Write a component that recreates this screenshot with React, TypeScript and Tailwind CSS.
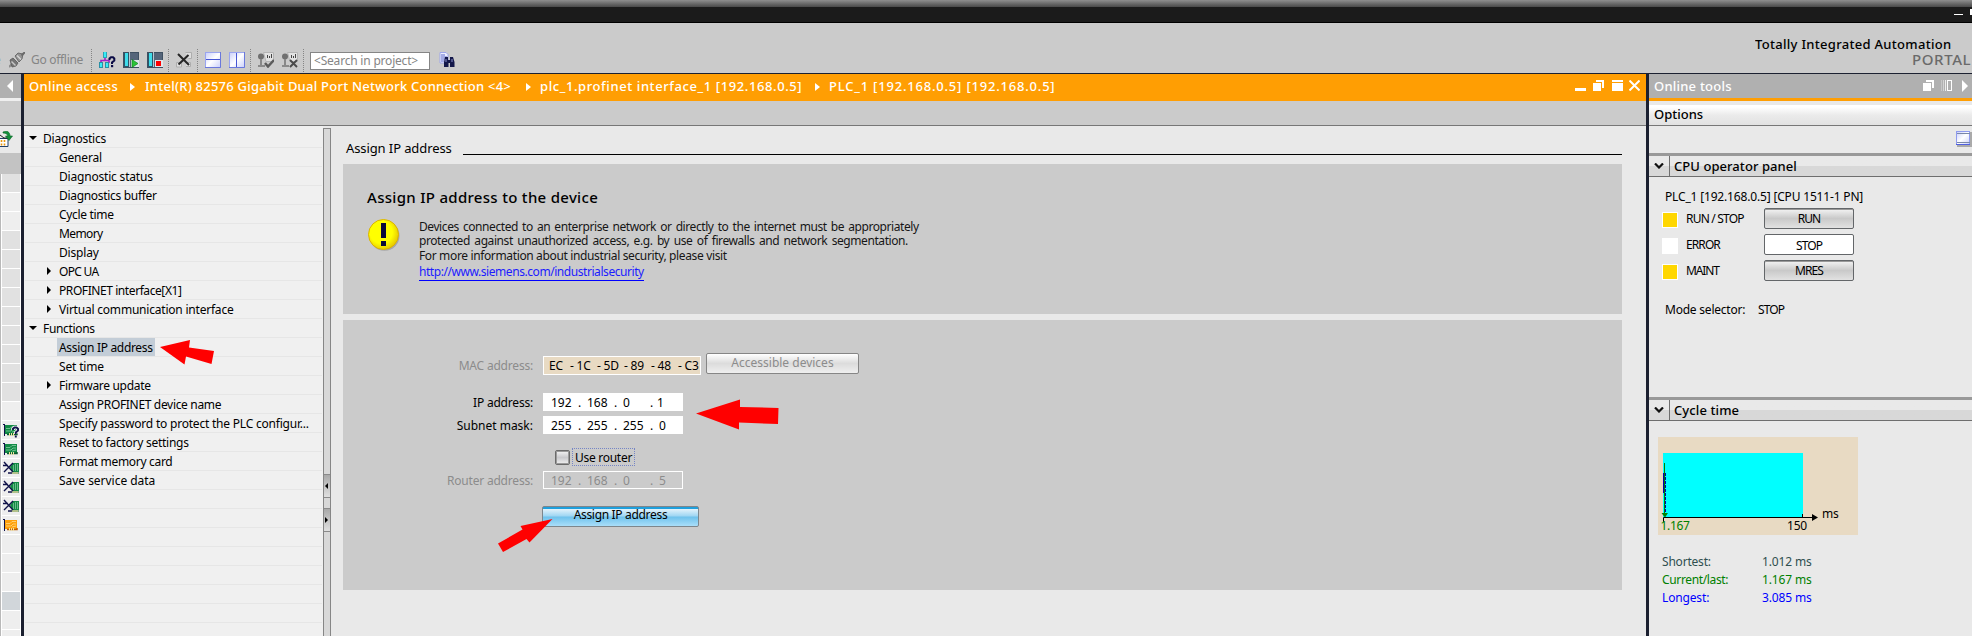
import type { ReactNode } from "react";

/* ---------- toolbar icons ---------- */

const Svg = ({ w = 16, h = 16, className = "", children }: { w?: number; h?: number; className?: string; children: ReactNode }) => (
  <svg width={w} height={h} viewBox={`0 0 ${w} ${h}`} className={`block shrink-0 ${className}`}>
    {children}
  </svg>
);

const PlugIcon = () => (
  <Svg>
    <path d="M0 15l4-4" stroke="#8a8a8a" strokeWidth="2" />
    <path d="M1 8l3-2 5 5-2 3-4 1z" fill="#757575" stroke="#5a5a5a" strokeWidth=".8" />
    <path d="M2.500 9.500l4 4" stroke="#c8c8c8" strokeWidth="1.400" />
    <path d="M6 4l3-3 5 1-1 5-3 3z" fill="#949494" stroke="#5a5a5a" strokeWidth=".8" />
    <path d="M8 3.500l4 4" stroke="#d6d6d6" strokeWidth="1.400" />
    <path d="M12.500 3.500L16 0" stroke="#6a6a6a" strokeWidth="2" />
  </Svg>
);

const NetworkHelpIcon = () => (
  <Svg w={17}>
    <rect x="4" y="0" width="4" height="6" fill="#2aa5b5" />
    <rect x="5" y="0" width="2" height="5" fill="#35ecf5" />
    <path d="M6 6v3M2 11V8.500h8V11" stroke="#a020c8" strokeWidth="1.6" fill="none" />
    <rect x="0" y="10" width="4" height="6" fill="#2a8fa5" />
    <rect x="1" y="11" width="2" height="4" fill="#35ecf5" />
    <rect x="6" y="10" width="4" height="6" fill="#2a8fa5" />
    <rect x="7" y="11" width="2" height="4" fill="#35ecf5" />
    <path d="M10.500 8V6.500L12 5.200h2L15.300 6.500v2L13 10.500V12" stroke="#0b0b45" strokeWidth="2" fill="none" />
    <rect x="12" y="13" width="2.200" height="2.200" fill="#0b0b45" />
  </Svg>
);

const CpuIcon = ({ stop = false }: { stop?: boolean }) => (
  <Svg>
    <rect x="0" y="0" width="16" height="16" fill="#3f5062" />
    <rect x="1" y="1" width="5" height="14" fill="#2b5668" />
    <rect x="2" y="1" width="3" height="13" fill="#3fdcea" />
    <rect x="7" y="1" width="8" height="14" fill="#55657a" />
    <rect x="6" y="0" width="1" height="15" fill="#b8c6d2" />
    <rect x="8" y="8" width="8" height="7" fill="#dfe6ea" />
    {stop ? <rect x="9" y="9" width="5" height="5" fill="#ff0000" /> : <path d="M9 7.500l6 4-6 4z" fill="#2bc437" stroke="#0c7c1c" strokeWidth=".6" />}
  </Svg>
);

const CrossRefIcon = () => (
  <Svg>
    <path d="M9.500.500h6v6h-3M.5 15V10.500h5v4.500zM10 14.500h4.500v-4h-4" fill="#dedede" stroke="#adadad" />
    <path d="M2 2l11 11M12.500 3L2.500 12.500" stroke="#262626" strokeWidth="2" />
  </Svg>
);

const SplitIcon = ({ vertical = false }: { vertical?: boolean }) => (
  <Svg>
    <defs>
      <linearGradient id="pane" x1="0" y1="0" x2="1" y2="1">
        <stop offset="0" stopColor="#c9cffb" />
        <stop offset=".5" stopColor="#fff" />
        <stop offset="1" stopColor="#c9cffb" />
      </linearGradient>
    </defs>
    <rect x=".5" y=".5" width="15" height="15" fill="url(#pane)" stroke="#9aa5ef" />
    <path d="M15.500 0v15.500H0" stroke="#6a78dc" fill="none" />
    <path d={vertical ? "M7.500 1v14" : "M1 7.500h14"} stroke="#4656d4" />
  </Svg>
);

const KeyIcon = ({ cross = false }: { cross?: boolean }) => (
  <Svg>
    <path d="M5.500.500h10v9H8z" fill="#e2e2e2" stroke="#b4b4b4" />
    <path d="M9.500 3v3M11.500 4v2M13.500 2v4" stroke="#444" />
    <circle cx="3" cy="4.500" r="3" fill="#707070" />
    <path d="M2 7h2v6H2z" fill="#888" />
    <path d="M0 13h7v2H0z" fill="#8a8a8a" />
    {cross ? <path d="M8 8l7 7M15 8l-7 7" stroke="#4b4b4b" strokeWidth="1.900" /> : <path d="M7 11l3 3.500 6-6.500" stroke="#5c5c5c" strokeWidth="2.500" fill="none" />}
  </Svg>
);

const FindIcon = () => (
  <Svg>
    <path d="M1 .500h6l2 2V11H1z" fill="#eef0ff" stroke="#9ea6ea" />
    <path d="M2 3h4M2 5h6M2 7h5M2 9h3" stroke="#5b67c8" />
    <path d="M5 15V10l1-5h3v3h2V5h3l1.500 5v5h-4.500v-4h-1.500v4z" fill="#14184a" />
    <path d="M7 7v3M13 7v3" stroke="#8890cc" />
  </Svg>
);

const ToolSep = ({ className = "" }: { className?: string }) => <div className={`h-[23px] w-0 border-l border-dotted border-[#858585] ${className}`} />;

/* ---------- network adapter icons of the project tree ---------- */

const CardIcon = ({ kind }: { kind: string }) => {
  const orange = kind === "orange";
  const main = orange ? "#ffa00a" : "#128a45";
  const light = orange ? "#ffd27a" : "#7cc79a";
  const low = orange ? "#c05a00" : "#0a5a2c";
  if (kind === "x")
    return (
      <Svg className="-mt-px">
        <path d="M7 7l3-4h6v9H9z" fill={main} />
        <path d="M10.500 5v6M12.500 4v7M14.500 4v7" stroke={light} strokeWidth=".8" />
        <path d="M9 13h7" stroke={low} />
        <path d="M10 12v2M12 12v2M14 12v2" stroke="#e8dd88" />
        <path d="M1 2l9 10M10 3L1 12M0 5.500h5M5 13h4" stroke="#11134a" strokeWidth="1.400" />
      </Svg>
    );
  return (
    <Svg className="-mt-px">
      <path d="M0 2.500h2M1.500 2v12" stroke="#11134a" />
      <rect x="2" y="3" width="12" height="9" fill={main} />
      <path d="M3 6.500h4l2-2h4M3 9h5l2-2h3M9 10l4-1" stroke={light} fill="none" strokeWidth=".9" />
      <path d="M4 12.500h10V11" stroke={low} strokeWidth="1.500" fill="none" />
      <path d="M6.500 11v3M8.500 11v3M10.500 11v3" stroke="#f0e2a0" />
      {kind === "help" && (
        <>
          <path d="M10 8V6.800L11.500 5.500h2L15 6.800v1.700L12.800 10.500V12" stroke="#fff" strokeWidth="3.500" fill="none" />
          <path d="M10 8V6.800L11.500 5.500h2L15 6.800v1.700L12.800 10.500V12M12.800 13.500v2" stroke="#11134a" strokeWidth="1.900" fill="none" />
        </>
      )}
    </Svg>
  );
};

/* ---------- left strip ---------- */

const stripRows = [
  "g", "l", "l", "g", "g", "g", "g", "g", "g", "g", "g", "g", "l",
  "help", "green", "x", "x", "x", "orange", "l", "l", "l", "sel", "l", "l",
];

const LeftStrip = () => (
  <aside className="flex w-[21px] shrink-0 flex-col overflow-hidden bg-[#e9e9e9]">
    <div className="flex h-6 shrink-0 items-center bg-[#b0b0b0] pl-[7px]">
      <Svg w={6} h={12}>
        <path d="M6 0v12L0 6z" fill="#fff" />
      </Svg>
    </div>
    <div className="h-[3px] shrink-0 bg-[#efefef]" />
    <div className="h-[25px] shrink-0 border-b border-[#777] bg-[#cbcbcb]" />
    <div className="h-[27px] shrink-0 pt-[5px]">
      <Svg w={13} h={16}>
        <path d="M0 7.500h8v8H0" fill="#fff" stroke="#20406a" />
        <path d="M0 4l4 3h4" stroke="#222" fill="none" />
        <path d="M1.500 9v2M4.500 9v2M1.500 12.500v2M4.500 12.500v2" stroke="#e8960c" strokeWidth="1.600" />
        <path d="M3 1c4-2 7 0 7 4h2.500L9 9.500 5.500 5H8C7 3 6 2 3 2z" fill="#12903a" stroke="#0a6426" strokeWidth=".6" />
      </Svg>
    </div>
    <div className="h-[21px] shrink-0 bg-[#c3c3c3]" />
    <div className="flex-1 overflow-hidden border-l border-[#b9b9b9] bg-white px-px">
      {stripRows.map((k, i) => (
        <div
          key={i}
          className={`flex h-[19px] items-center overflow-hidden border-b border-white pl-px ${
            k === "g" ? "bg-[#e1e1e1]" : k === "sel" ? "bg-[#d1d6da]" : "bg-[#eeeeee]"
          }`}
        >
          {k.length > 1 || k === "x" ? k !== "sel" && <CardIcon kind={k} /> : null}
        </div>
      ))}
    </div>
  </aside>
);

/* ---------- navigation tree ---------- */

type Node = { label: string; level: 0 | 1; arrow?: boolean; active?: boolean; track: string };

const nodes: Node[] = [
  { label: "Diagnostics", level: 0, arrow: true, track: "tracking-[-0.2px]" },
  { label: "General", level: 1, track: "tracking-[-0.2px]" },
  { label: "Diagnostic status", level: 1, track: "tracking-[-0.19px]" },
  { label: "Diagnostics buffer", level: 1, track: "tracking-[-0.31px]" },
  { label: "Cycle time", level: 1, track: "tracking-[-0.32px]" },
  { label: "Memory", level: 1, track: "tracking-[-0.6px]" },
  { label: "Display", level: 1, track: "tracking-[-0.16px]" },
  { label: "OPC UA", level: 1, arrow: true, track: "tracking-[-0.7px]" },
  { label: "PROFINET interface[X1]", level: 1, arrow: true, track: "tracking-[-0.42px]" },
  { label: "Virtual communication interface", level: 1, arrow: true, track: "tracking-[-0.21px]" },
  { label: "Functions", level: 0, arrow: true, track: "tracking-[-0.33px]" },
  { label: "Assign IP address", level: 1, active: true, track: "tracking-[-0.32px]" },
  { label: "Set time", level: 1, track: "tracking-[-0.17px]" },
  { label: "Firmware update", level: 1, arrow: true, track: "tracking-[-0.31px]" },
  { label: "Assign PROFINET device name", level: 1, track: "tracking-[-0.33px]" },
  { label: "Specify password to protect the PLC configur...", level: 1, track: "tracking-[-0.21px]" },
  { label: "Reset to factory settings", level: 1, track: "tracking-[-0.26px]" },
  { label: "Format memory card", level: 1, track: "tracking-[-0.32px]" },
  { label: "Save service data", level: 1, track: "tracking-[-0.03px]" },
];

const NavTree = () => (
  <nav className="w-[299px] shrink-0 overflow-hidden bg-[#f0f0f0] pt-[3px] pr-px pl-px text-[12px] leading-[19px]">
    {nodes.map((n) => (
      <div key={n.label} className="flex h-[19px] items-center border-b border-[#e6e6e6]">
        <div className={`flex shrink-0 items-center ${n.level === 0 ? "w-4 pl-1" : "w-8 pl-[22px]"}`}>
          {n.arrow &&
            (n.level === 0 ? (
              <Svg w={8} h={4}>
                <path d="M0 0h8L4 4z" />
              </Svg>
            ) : (
              <Svg w={4} h={8}>
                <path d="M0 0v8l4-4z" />
              </Svg>
            ))}
        </div>
        <span className={`h-[18px] whitespace-pre ${n.level === 0 ? "pl-0.5" : "px-0.5"} ${n.active ? "bg-[#c3cdd7]" : ""} ${n.track}`}>{n.label}</span>
      </div>
    ))}
    {Array.from({ length: 8 }, (_, i) => (
      <div key={i} className="h-[19px] border-b border-[#e6e6e6]" />
    ))}
  </nav>
);

const SplitHandle = ({ right = false }: { right?: boolean }) => (
  <div className="flex h-6 shrink-0 items-center border-y border-[#8a8a8a] bg-linear-to-b from-[#a9a9a9] to-[#e0e0e0] pl-px">
    <Svg w={3} h={6}>
      <path d={right ? "M0 0v6l3-3z" : "M3 0v6L0 3z"} />
    </Svg>
  </div>
);

const Splitter = () => (
  <div className="mt-0.5 flex w-2 shrink-0 flex-col border-x border-t border-[#868686] bg-[#d8d8d8]">
    <div className="h-[345px]" />
    <SplitHandle />
    <div className="h-[10px]" />
    <SplitHandle right />
  </div>
);

/* ---------- form ---------- */

const Octets = ({ parts, lastPad = false }: { parts: string[]; lastPad?: boolean }) => (
  <div className="flex pl-2 whitespace-pre">
    {parts.slice(0, 3).map((p, i) => (
      <span key={i} className={`flex shrink-0 ${i === 2 ? "w-[34px]" : "w-9"}`}>
        <span className="w-[27px]">{p}</span>
        <span>.</span>
      </span>
    ))}
    <span className={lastPad ? "pl-[2px]" : ""}>{parts[3]}</span>
  </div>
);

const Label = ({ dim = false, track, children }: { dim?: boolean; track: string; children: string }) => (
  <div className={`mr-[10px] w-[190px] shrink-0 text-right whitespace-nowrap ${dim ? "text-[#8c8c8c]" : ""} ${track}`}>{children}</div>
);

const Crumb = ({ track, children }: { track: string; children: string }) => <span className={`shrink-0 whitespace-nowrap ${track}`}>{children}</span>;

const CrumbArrow = ({ className }: { className: string }) => (
  <Svg w={5} h={8} className={className}>
    <path d="M0 0v8l5-4z" fill="#fff" />
  </Svg>
);

const RestoreGlyph = () => (
  <Svg w={11} h={11}>
    <path d="M3 0h8v8H9V2H3z" fill="#fff" />
    <rect x="0" y="3" width="8" height="8" fill="#fff" />
  </Svg>
);

const Editor = () => (
  <main className="flex w-[1622px] shrink-0 flex-col bg-[#e9e9e9]">
    <div className="flex h-[27px] shrink-0 items-center bg-[#ff9e03] pr-[6px] pb-[3px] pl-[5px] text-[13px] leading-[24px] font-[550] text-white">
      <Crumb track="w-[101px] tracking-[0.35px]">Online access</Crumb>
      <CrumbArrow className="mt-[2px] mr-[10px]" />
      <Crumb track="w-[381px] tracking-[0.24px]">{"Intel(R) 82576 Gigabit Dual Port Network Connection <4>"}</Crumb>
      <CrumbArrow className="mt-[2px] mr-[9px]" />
      <Crumb track="w-[275px] tracking-[0.59px]">plc_1.profinet interface_1 [192.168.0.5]</Crumb>
      <CrumbArrow className="mt-[2px] mr-[9px]" />
      <Crumb track="tracking-[0.8px]">PLC_1 [192.168.0.5] [192.168.0.5]</Crumb>
      <div className="ml-auto flex h-3 items-start">
        <div className="mt-2 h-[3px] w-[11px] bg-white" />
        <div className="ml-[7px]">
          <RestoreGlyph />
        </div>
        <Svg w={11} h={11} className="ml-2">
          <path d="M0 0h11v2H0zM0 3h11v8H0z" fill="#fff" />
        </Svg>
        <Svg w={11} h={11} className="ml-[6px]">
          <path d="M.5.500l10 10M10.500.500l-10 10" stroke="#fff" strokeWidth="2" />
        </Svg>
      </div>
    </div>
    <div className="h-[25px] shrink-0 border-b border-[#777] bg-[#cbcbcb]" />
    <div className="flex min-h-0 flex-1">
      <NavTree />
      <Splitter />
      <section className="flex-1 pr-6 pl-3">
        <div className="flex h-[38px] pt-[11px] pl-[3px]">
          <h2 className="w-[117px] text-[13px] leading-[22px] tracking-[-0.1px]">Assign IP address</h2>
          <div className="mt-[17px] h-px flex-1 bg-black" />
        </div>
        <div className="h-[150px] bg-[#cbcbcb] pt-[22px] pl-6">
          <h1 className="text-[15px] leading-[22px] font-[550] tracking-[0.3px]">Assign IP address to the device</h1>
          <div className="mt-[10px] flex">
            <Svg w={33} h={33} className="mt-px">
              <defs>
                <radialGradient id="warn" cx=".42" cy=".42" r=".62">
                  <stop offset=".6" stopColor="#ffff00" />
                  <stop offset="1" stopColor="#e4c400" />
                </radialGradient>
              </defs>
              <circle cx="17.500" cy="16.800" r="15" fill="#8d8d8d" opacity=".6" />
              <circle cx="16.500" cy="15.500" r="15" fill="url(#warn)" stroke="#dcb400" />
              <path d="M14 4h5v15h-5zM14 22h5v5h-5z" fill="#0b0b3a" />
            </Svg>
            <div className="pt-px pl-[19px] text-[12px] tracking-[-0.42px] whitespace-nowrap text-[#161616]">
              <p className="leading-[15px] [word-spacing:1.4px]">Devices connected to an enterprise network or directly to the internet must be appropriately</p>
              <p className="leading-[14px] [word-spacing:1.7px]">protected against unauthorized access, e.g. by use of firewalls and network segmentation.</p>
              <p className="leading-[15px] tracking-[-0.36px]">For more information about industrial security, please visit</p>
              <p className="mt-px w-[225px] border-b border-[#0000ff] leading-[16px] tracking-[-0.44px] text-[#1c1cff]">http://www.siemens.com/industrialsecurity</p>
            </div>
          </div>
        </div>
        <div className="mt-[6px] h-[270px] bg-[#cbcbcb] pt-[33px] text-[12px] leading-[18px]">
          <div className="flex h-[22px] items-start">
            <div className="pt-1">
              <Label dim track="tracking-[-0.2px]">MAC address:</Label>
            </div>
            <div className="mt-[3px] flex h-[19px] w-[158px] items-center border border-white bg-[#e8dac3] pt-px pl-[5px]">
              {["EC", "1C", "5D", "89", "48", "C3"].map((m, i) => (
                <span key={m} className={`flex shrink-0 whitespace-pre ${i === 0 ? "w-[21px]" : "w-[27px]"}`}>
                  {i > 0 && <span className="w-[6.500px]">-</span>}
                  <span className="tracking-[-0.2px]">{m}</span>
                </span>
              ))}
            </div>
            <button className="ml-[5px] h-[21px] w-[153px] rounded-[2px] border border-[#868686] bg-linear-to-b from-white via-[#dcdcdc] to-[#efefef] pb-[2px] leading-[17px] text-[#8c8c8c]">
              Accessible devices
            </button>
          </div>
          <div className="mt-[18px] flex h-[18px]">
            <Label track="mt-px tracking-[-0.2px]">IP address:</Label>
            <div className="w-[140px] bg-white pt-px">
              <Octets parts={["192", "168", "0", "1"]} />
            </div>
          </div>
          <div className="mt-[5px] flex h-[18px]">
            <Label track="mt-px">Subnet mask:</Label>
            <div className="w-[140px] bg-white pt-px">
              <Octets parts={["255", "255", "255", "0"]} lastPad />
            </div>
          </div>
          <div className="mt-[14px] flex h-[18px] items-center pl-[212px]">
            <span className="mt-px h-[15px] w-[15px] rounded-[2px] border border-[#6a6a6a] bg-linear-to-b from-[#f4f4f4] via-[#c9c9cc] to-[#f0f0f0] shadow-[inset_0_0_0_1px_#9a9a9a]" />
            <span className="ml-[2px] flex h-[18px] w-[63px] items-center border border-dotted border-[#7585c5] pl-[2px] leading-[19px] tracking-[-0.28px] whitespace-nowrap">Use router</span>
          </div>
          <div className="mt-[5px] flex h-[18px]">
            <Label dim track="mt-px tracking-[-0.2px]">Router address:</Label>
            <div className="w-[140px] border border-white text-[#8c8c8c]">
              <div className="-ml-px">
                <Octets parts={["192", "168", "0", "5"]} lastPad />
              </div>
            </div>
          </div>
          <button className="mt-[17px] ml-[199px] block h-[21px] w-[157px] rounded-[2px] border border-[#7d868c] bg-[linear-gradient(to_bottom,#1f9fdc_0px,#1f9fdc_2px,#e4f3fb_2px,#9fd6f3_9px,#6fc2ec_10px,#a9def9_19px)] pb-[3px] text-center leading-[16px] tracking-[-0.32px]">
            Assign IP address
          </button>
        </div>
      </section>
    </div>
  </main>
);

/* ---------- task card ---------- */

const PaletteHeader = ({ track, children }: { track: string; children: string }) => (
  <div className="flex h-6 shrink-0 border-t-[3px] border-b border-t-[#999] border-b-[#6e6e6e] bg-linear-to-b from-[#e9e9e9] from-50% to-[#d8d8d8] to-50% text-[13px] font-[550]">
    <div className="flex w-[21px] items-center justify-center border-r border-[#6e6e6e]">
      <Svg w={10} h={6}>
        <path d="M1 .500l4 4 4-4" stroke="#111" strokeWidth="2.200" fill="none" />
      </Svg>
    </div>
    <span className={`pl-1 leading-5 ${track}`}>{children}</span>
  </div>
);

const operatorRows = [
  { led: "bg-[#ffd700]", label: "RUN / STOP", track: "tracking-[-0.75px] [word-spacing:-0.2px]", button: "RUN", look: "bg-linear-to-b from-[#f4f4f4] via-[#c9c9c9] to-[#e2e2e2] pb-0 shadow-[inset_0_1px_0_#999]" },
  { led: "bg-white", label: "ERROR", track: "tracking-[-0.9px]", button: "STOP", look: "bg-white pt-[3px]" },
  { led: "bg-[#ffd700]", label: "MAINT", track: "tracking-[-1.1px]", button: "MRES", look: "bg-linear-to-b from-[#f4f4f4] via-[#c9c9c9] to-[#e2e2e2] pb-0 shadow-[inset_0_1px_0_#999]" },
];

const timings = [
  { label: "Shortest:", value: "1.012 ms", tone: "text-[#2f4f4f]", track: "tracking-[-0.2px]" },
  { label: "Current/last:", value: "1.167 ms", tone: "text-[#008000]", track: "tracking-[-0.36px]" },
  { label: "Longest:", value: "3.085 ms", tone: "text-[#0000ff]", track: "tracking-[-0.15px]" },
];

const TaskCard = () => (
  <aside className="flex w-[323px] shrink-0 flex-col bg-[#e9e9e9] text-[12px]">
    <div className="flex h-[27px] shrink-0 items-center border-b-[3px] border-[#ff9e03] bg-[#b0b0b0] pl-[5px]">
      <span className="text-[13px] leading-6 font-[550] tracking-[0.22px] text-white">Online tools</span>
      <div className="-mt-px ml-auto flex items-center pr-1">
        <RestoreGlyph />
        <Svg w={11} h={11} className="ml-[7px]">
          <path d="M.5 0v11" stroke="#c6c6c6" />
          <path d="M2.500 0v11" stroke="#d4d4d4" />
          <path d="M4.500 0v11" stroke="#ececec" />
          <rect x="6.500" y=".5" width="4" height="10" stroke="#fff" fill="none" />
        </Svg>
        <Svg w={6} h={12} className="ml-[10px]">
          <path d="M0 0v12l6-6z" fill="#fff" />
        </Svg>
      </div>
    </div>
    <div className="mt-1 flex h-[21px] shrink-0 items-center border-b border-[#777] bg-linear-to-b from-white from-10% via-[#ebebeb] via-50% to-[#e2e2e2] pb-0.5 pl-[5px] text-[13px] leading-[18px] font-[550]">Options</div>
    <div className="flex h-[27px] shrink-0 justify-end pt-[5px]">
      <Svg>
        <rect x="1" y="1" width="15" height="15" fill="#aaa" />
        <rect x=".5" y=".5" width="13" height="13" fill="url(#pane)" stroke="#8f9bee" />
        <path d="M1 2.500h13M1 11.500h13" stroke="#7a88a8" />
        <path d="M0 13.500h14" stroke="#5060e0" />
      </Svg>
    </div>
    <PaletteHeader track="tracking-[0.06px]">CPU operator panel</PaletteHeader>
    <div className="h-[220px] shrink-0 pt-[11px] pl-[13px] leading-[18px]">
      <p className="pl-[3px] tracking-[-0.17px]">PLC_1 [192.168.0.5] [CPU 1511-1 PN]</p>
      <div className="mt-[2px] flex flex-col gap-[5px]">
        {operatorRows.map((r) => (
          <div key={r.label} className="flex h-[21px]">
            <span className={`mt-1 h-4 w-4 border border-white ${r.led}`} />
            <span className={`mt-[2px] ml-2 w-[78px] ${r.track}`}>{r.label}</span>
            <button className={`flex h-[21px] w-[90px] items-center justify-center rounded-[2px] border border-[#636669] leading-[18px] tracking-[-0.9px] ${r.look}`}>{r.button}</button>
          </div>
        ))}
      </div>
      <p className="mt-5 flex pl-[3px]">
        <span className="w-[93px] tracking-[-0.22px]">Mode selector:</span>
        <span className="tracking-[-0.9px]">STOP</span>
      </p>
    </div>
    <PaletteHeader track="tracking-[0.1px]">Cycle time</PaletteHeader>
    <div className="pt-4 pl-[9px] leading-[18px]">
      <svg width="200" height="98" viewBox="0 0 200 98" className="block text-[12px]">
        <rect width="200" height="98" fill="#e8dac3" />
        <rect x="5" y="16" width="140" height="64" fill="#00ffff" />
        <path d="M5.500 36v20" stroke="#0000aa" />
        <path d="M7.500 36v44" stroke="#0000aa" strokeDasharray="3 1" />
        <path d="M6.500 26v52" stroke="#008000" />
        <path d="M3.500 76h6.500l-3 4.500z" fill="#008000" />
        <path d="M5.500 85v-4.500H155M144.500 77v4" stroke="#000" fill="none" />
        <path d="M154 77l6 3.500-6 3.500z" />
        <text x="164" y="81" letterSpacing="-0.3">ms</text>
        <text x="2.500" y="93" fill="#008000" letterSpacing="-0.3">1.167</text>
        <text x="129" y="93" letterSpacing="-0.2">150</text>
      </svg>
      <div className="mt-[18px] pl-1">
        {timings.map((t) => (
          <div key={t.label} className={`flex h-[18px] ${t.tone}`}>
            <span className={`w-[100px] ${t.track}`}>{t.label}</span>
            <span className="tracking-[-0.15px]">{t.value}</span>
          </div>
        ))}
      </div>
    </div>
  </aside>
);

/* ---------- page ---------- */

const Toolbar = () => (
  <div className="flex h-[51px] shrink-0 items-center border-b border-[#1b2030] bg-[#cbcbcb] pt-6 text-[12px] leading-[18px]">
    <span className="flex w-[9px] shrink-0 overflow-hidden text-[#7f95b5]">
      <span className="-ml-[6px]">e</span>
    </span>
    <PlugIcon />
    <span className="ml-[6px] w-[60px] tracking-[-0.3px] text-[#858585]">Go offline</span>
    <ToolSep className="mr-[7px]" />
    <NetworkHelpIcon />
    <div className="ml-[7px] flex gap-2">
      <CpuIcon />
      <CpuIcon stop />
    </div>
    <ToolSep className="mr-[7px] ml-[5px]" />
    <CrossRefIcon />
    <ToolSep className="mr-[7px] ml-[5px]" />
    <div className="flex gap-2">
      <SplitIcon />
      <SplitIcon vertical />
    </div>
    <ToolSep className="mr-[7px] ml-[5px]" />
    <div className="flex gap-2">
      <KeyIcon />
      <KeyIcon cross />
    </div>
    <ToolSep className="mr-[6px] ml-[5px]" />
    <div className="mt-[2px] flex h-[18px] w-[120px] items-center border border-[#858585] bg-white pl-[3px] tracking-[-0.2px] whitespace-nowrap text-[#858585]">{"<Search in project>"}</div>
    <div className="ml-[9px]">
      <FindIcon />
    </div>
    <div className="mt-[-26px] ml-auto flex h-[38px] w-[217px] shrink-0 flex-col overflow-hidden font-[550]">
      <span className="mt-[8px] text-[13px] leading-[16px] tracking-[0.3px] whitespace-nowrap">Totally Integrated Automation</span>
      <span className="-mt-px pl-[157px] text-[15px] leading-[16px] tracking-[0.6px] whitespace-nowrap text-[#6a6a6a]">PORTAL</span>
    </div>
  </div>
);

export default function App() {
  return (
    <div className="relative flex h-[636px] w-[1972px] flex-col overflow-hidden bg-[#e9e9e9] font-['Noto_Sans',sans-serif] text-black">
      <div className="h-[7px] shrink-0 bg-linear-to-b from-[#8f8f8f] to-[#4a4a4a]" />
      <div className="flex h-4 shrink-0 items-start justify-end border-b border-black bg-[#1b1b1b]">
        <div className="mt-[7px] mr-[7px] h-px w-[9px] bg-white" />
        <div className="mt-[2px] h-[6px] w-[2px] bg-white" />
      </div>
      <Toolbar />
      <div className="flex min-h-0 flex-1">
        <LeftStrip />
        <div className="w-[3px] shrink-0 bg-[#1b2030]" />
        <Editor />
        <div className="w-[3px] shrink-0 bg-[#1b2030]" />
        <TaskCard />
      </div>
      <svg width="1972" height="636" viewBox="0 0 1972 636" className="pointer-events-none absolute inset-0">
        <g fill="#ff0000">
          <path d="M160 347L190 340L189 347.500L214 351L211.500 364L186 356.500L184.500 364.500Z" />
          <path d="M696 413.500L740 399.500V407L778.500 408L778 424L739 422.500V429.500Z" />
          <path d="M552.500 519L520.500 526L522.500 529.500L498 543.500L503 552L526.500 539L529.500 542.500Z" />
        </g>
      </svg>
    </div>
  );
}
